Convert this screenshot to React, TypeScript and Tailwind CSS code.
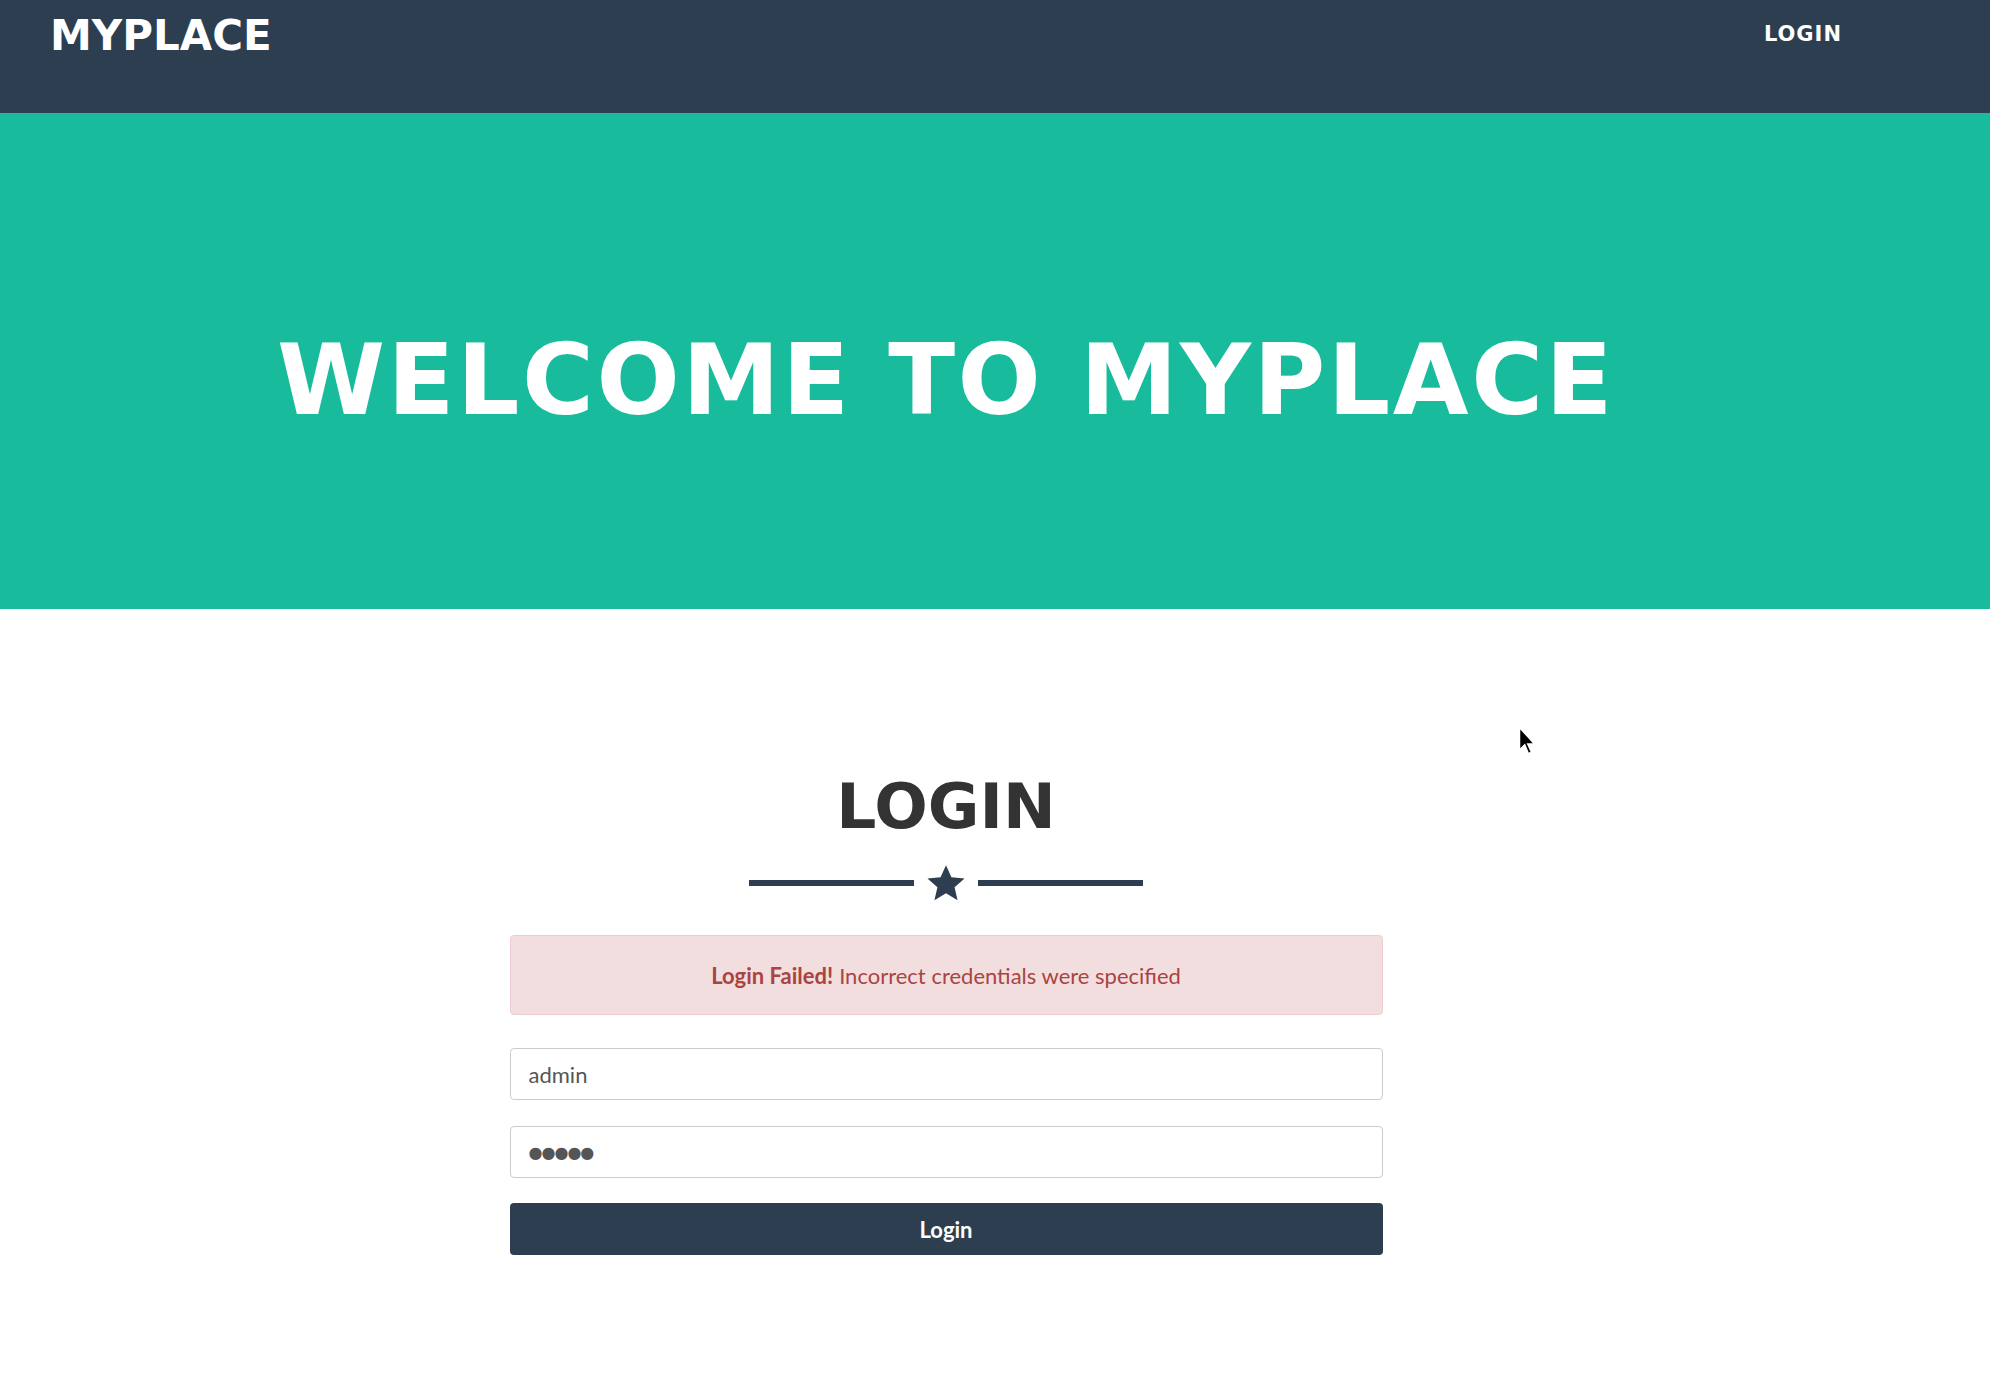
import React from "react";

const display = { fontFamily: '"DejaVu Sans", "Liberation Sans", sans-serif' };
const body = { fontFamily: 'Lato, "Open Sans", sans-serif' };

function StarDivider() {
  return (
    <div className="mt-[25px] flex h-[40px] items-center justify-center">
      <div className="h-[6px] w-[165px] bg-[#2c3e50]" />
      <svg viewBox="0 0 24 24" className="mx-[11px] h-[42px] w-[42px]" fill="#2c3e50">
        <path d="M12 1.8l3.1 6.9 7.5.7-5.7 5 1.7 7.4L12 17.9l-6.6 3.9 1.7-7.4-5.7-5 7.5-.7z" />
      </svg>
      <div className="h-[6px] w-[165px] bg-[#2c3e50]" />
    </div>
  );
}

function Cursor() {
  return (
    <svg
      viewBox="0 0 12 20"
      className="absolute left-[1518px] top-[726px] h-[30px] w-[18px]"
    >
      <path d="M1 1v15l3.5-3.5 2.5 6 2-1-2.5-5.5H11z" fill="#000" stroke="#fff" strokeWidth="1" />
    </svg>
  );
}

export default function App() {
  return (
    <div className="relative min-h-[1386px] bg-white" style={body}>
      <header className="h-[113px] bg-[#2c3e50]">
        <div className="flex h-full w-[1892px] items-start justify-between px-[50px]">
          <a
            className="mt-[15px] text-[42px] font-bold leading-none text-white"
            style={display}
          >
            MYPLACE
          </a>
          <a
            className="mt-[24px] text-[21px] font-bold leading-none tracking-[1px] text-white"
            style={display}
          >
            LOGIN
          </a>
        </div>
      </header>

      <section className="h-[496px] bg-[#18bc9c]">
        <div className="flex w-[1892px] justify-center pt-[218px]">
          <h1
            className="text-[98px] font-bold leading-none tracking-[2.5px] text-white"
            style={display}
          >
            WELCOME TO MYPLACE
          </h1>
        </div>
      </section>

      <section className="w-[1892px] pt-[166px]">
        <h2
          className="text-center text-[63px] font-bold leading-none text-[#333]"
          style={display}
        >
          LOGIN
        </h2>
        <StarDivider />

        <form className="mx-auto mt-[32px] w-[873px]">
          <div className="flex h-[80px] items-center justify-center rounded-[4px] border border-[#ebccd1] bg-[#f2dede] text-[22px] text-[#a94442]">
            <strong className="font-bold">Login Failed!</strong>
            <span className="ml-[6px]">Incorrect credentials were specified</span>
          </div>

          <input
            type="text"
            readOnly
            value="admin"
            className="mt-[33px] block h-[52px] w-full rounded-[4px] border border-[#ccc] px-[18px] text-[22px] text-[#555] outline-none"
          />
          <input
            type="text"
            readOnly
            value="●●●●●"
            aria-label="password"
            className="mt-[26px] block h-[52px] w-full rounded-[4px] border border-[#ccc] px-[18px] text-[16px] tracking-[-1px] text-[#555] outline-none"
            style={display}
          />
          <button
            type="button"
            className="mt-[25px] block h-[52px] w-full rounded-[4px] bg-[#2c3e50] text-[22px] font-bold text-white"
          >
            Login
          </button>
        </form>
      </section>

      <Cursor />
    </div>
  );
}
